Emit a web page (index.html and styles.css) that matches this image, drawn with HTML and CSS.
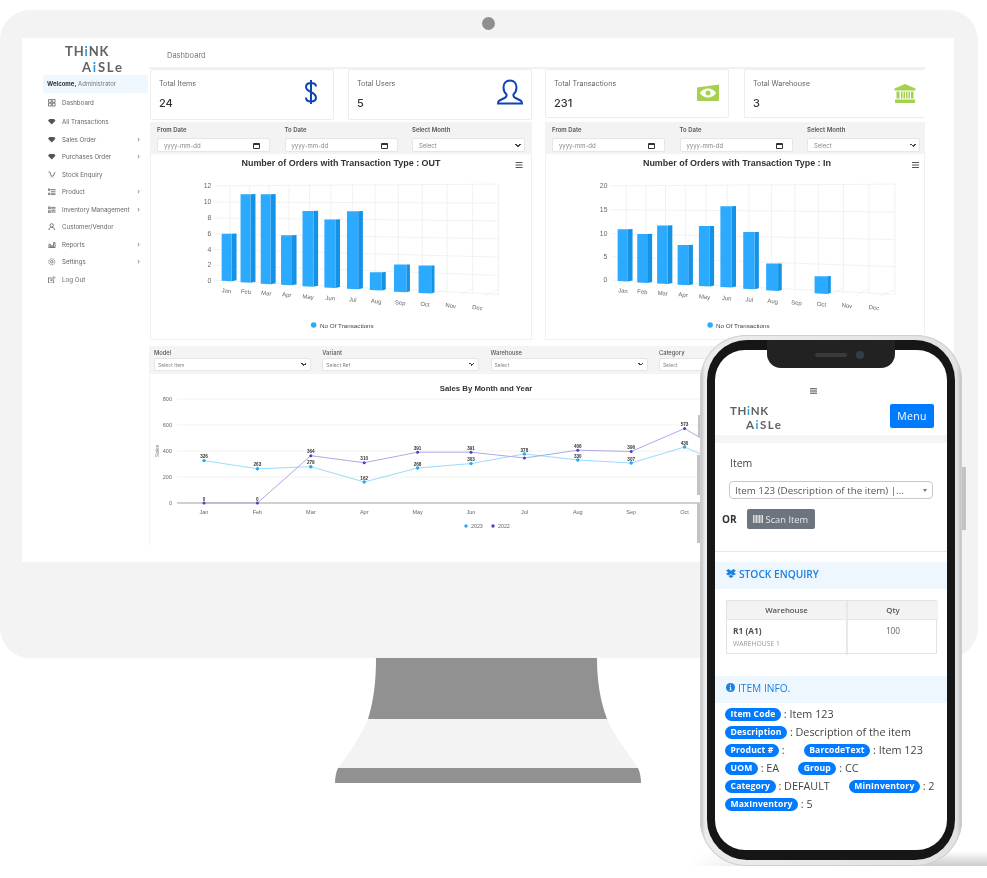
FILE: index.html
```html
<!DOCTYPE html>
<html lang="en">
<head>
<meta charset="utf-8">
<title>Think Aisle</title>
<link rel="stylesheet" href="styles.css">
</head>
<body>
<div class="stage">
  <div class="monitor">
    <div class="camera"></div>
    <div class="screen">
      <aside class="sidebar">
        <div class="logo logo-side"><span class="l1">TH<b>i</b>NK</span><span class="l2">A<b>i</b>SLe</span></div>
        <div class="welcome"><strong>Welcome,</strong> Administrator</div>
        <nav class="menu">
          <div class="mi first"><svg viewBox="0 0 8 8"><path d="M.5.5h3v3h-3zM4.5.5h3v3h-3zM.5 4.5h3v3h-3zM4.5 4.5h3v3h-3z"/></svg><span>Dashboard</span></div>
          <div class="mi"><svg viewBox="0 0 8 8"><path class="f" d="M1.5 1h5L8 3 4 7 0 3z"/></svg><span>All Transactions</span></div>
          <div class="mi"><svg viewBox="0 0 8 8"><path class="f" d="M1.5 1h5L8 3 4 7 0 3z"/></svg><span>Sales Order</span><i>›</i></div>
          <div class="mi"><svg viewBox="0 0 8 8"><path class="f" d="M1.5 1h5L8 3 4 7 0 3z"/></svg><span>Purchases Order</span><i>›</i></div>
          <div class="mi"><svg viewBox="0 0 8 8"><path d="M.5 1h1.500l1.500 4.500h2L7.500 1M2.800 7h.4M5.200 7h.4"/></svg><span>Stock Enquiry</span></div>
          <div class="mi"><svg viewBox="0 0 8 8"><path d="M.5 1h1.500v1.500H.5zM.5 5.500h1.500V7H.5zM3 1.700h5M3 3.500h5M3 5.500h5M3 7h5"/></svg><span>Product</span><i>›</i></div>
          <div class="mi"><svg viewBox="0 0 8 8"><path d="M.5 1h2v2h-2zM.5 5h2v2h-2zM3.500 1.500h4.500M3.500 3h4.500M3.500 5h4.500M3.500 6.500h4.500"/></svg><span>Inventory Management</span><i>›</i></div>
          <div class="mi"><svg viewBox="0 0 8 8"><circle cx="4" cy="2.500" r="1.800"/><path d="M1 7.500c0-2 1.200-3 3-3s3 1 3 3"/></svg><span>Customer/Vendor</span></div>
          <div class="mi"><svg viewBox="0 0 8 8"><path d="M.5 7.500h7M1 3.500h1.500v4H1zM3.500 5h1.500v2.500H3.500zM6 1.500h1.500v6H6z"/></svg><span>Reports</span><i>›</i></div>
          <div class="mi"><svg viewBox="0 0 8 8"><circle cx="4" cy="4" r="1.300"/><circle cx="4" cy="4" r="3.200" stroke-dasharray="1.200 .6"/></svg><span>Settings</span><i>›</i></div>
          <div class="mi"><svg viewBox="0 0 8 8"><path d="M6 4.500v3H.5V2h3M3 5l.3-1.500L6.500.5l1 1L4.500 4.700z"/></svg><span>Log Out</span></div>
        </nav>
      </aside>

      <main class="main">
        <div class="crumb">Dashboard</div>
        <div class="panels">
          <section class="panel">
            <div class="cards">
              <div class="card">
                <div><div class="card-label">Total Items</div><div class="card-value">24</div></div>
                <svg class="ico ico-dollar" width="14" height="26" viewBox="0 0 14 26"><path class="ico-blue" d="M12 7.500C12 5 10 4 7 4S2 5.500 2 8c0 5.500 10 4.500 10 10.500C12 21 10 22.500 7 22.500S2 21 2 18.500M7 1v24"/></svg>
              </div>
              <div class="card">
                <div><div class="card-label">Total Users</div><div class="card-value">5</div></div>
                <svg class="ico" width="26" height="26" viewBox="0 0 26 26"><path class="ico-blue" d="M13 1.500c-4 0-6.500 3-6.500 7 0 3 1.500 5.500 3 7 .4 1.500-.3 2.700-2 3.500l-5 2.500c-1 .5-1.500 1.500-1.500 3h24c0-1.500-.5-2.500-1.500-3l-5-2.500c-1.700-.8-2.400-2-2-3.500 1.500-1.500 3-4 3-7 0-4-2.500-7-6.500-7z"/></svg>
              </div>
            </div>
            <div class="filters">
              <div class="field">From Date<div class="ctl date">yyyy-mm-dd<svg width="7" height="7" viewBox="0 0 7 7"><path d="M.5 1.500h6v5h-6zM.5 2.500h6"/></svg></div></div>
              <div class="field">To Date<div class="ctl date">yyyy-mm-dd<svg width="7" height="7" viewBox="0 0 7 7"><path d="M.5 1.500h6v5h-6zM.5 2.500h6"/></svg></div></div>
              <label class="field">Select Month<select class="ctl sel"><option>Select</option></select></label>
            </div>
            <div class="chart">
              <svg class="chart-svg" viewBox="150 154 382 186">
                <text class="title" x="341" y="166">Number of Orders with Transaction Type : OUT</text>
                <path class="burger" d="M516.500 162.500h7M516.500 165h7M516.500 167.500h7"/>
                <g id="grid-v">
                  <path class="grid" d="M229.300 185.800V282.500M249 185.700V283M268.700 185.500V284M288.700 185.400V285M309.300 185.200V286M330.700 185.100V287.500M352.700 185V289M375.300 184.900V290.500M398.700 184.700V292M422.700 184.600V293M447.700 184.500V294M473.300 184.400V294.500M499.300 184.300V295M447.700 288.600L436 294.500M473.300 289.500L460 296M499.300 290.500L484 297"/>
                </g>
                <path class="grid" d="M212.700 186L499.300 184.300M212.700 202.300L499.300 203.300M212.700 218.300L499.300 221.300M212.700 234.300L499.300 239.300M212.700 250L499.300 257.700M212.700 265.700L499.300 276M212.700 281L499.300 295"/>
                <g class="ylab"><text x="210.500" y="188.500">12</text><text x="210.500" y="204.500">10</text><text x="210.500" y="220.500">8</text><text x="210.500" y="236.500">6</text><text x="210.500" y="252.500">4</text><text x="210.500" y="268">2</text><text x="210.500" y="283.500">0</text></g>
                <g class="bars">
                  <path class="side" d="M231 234.300l5-.3V281l-5 1z"/><path class="front" d="M221 234.300h10V282l-10-.5z"/>
                  <path class="side" d="M250 194.500l5-.2V282.500l-5 1z"/><path class="front" d="M240 194.500h10V283.500l-10-.5z"/>
                  <path class="side" d="M270.300 194.500l5-.2V284l-5 1z"/><path class="front" d="M260.300 194.500h10V285l-10-.6z"/>
                  <path class="side" d="M291.700 235.800l4.600-.3V285l-4.600 1z"/><path class="front" d="M280.700 235.800h11V286l-11-.6z"/>
                  <path class="side" d="M313.300 211.200l4.700-.2V286.500l-4.700 1z"/><path class="front" d="M302.300 211.200h11V287.500l-11-.6z"/>
                  <path class="side" d="M335.300 219.900l4.700-.2V287.700l-4.700 1z"/><path class="front" d="M324.300 219.900h11V288.700l-11-.6z"/>
                  <path class="side" d="M358.300 211.500l4.700-.2V289l-4.700 1z"/><path class="front" d="M347 211.500h11.300V290l-11.300-.6z"/>
                  <path class="side" d="M382 272.800l4-.2V290.300l-4 1z"/><path class="front" d="M370 272.800h12V291.300l-12-.6z"/>
                  <path class="side" d="M406.700 265.200l3.600-.2V292l-3.600 1z"/><path class="front" d="M394.300 265.200h12.400V293l-12.400-.6z"/>
                  <path class="side" d="M431.700 266.200l3.300-.2V293.300l-3.300 1z"/><path class="front" d="M419 266.200h12.700V294.300l-12.700-.6z"/>
                </g>
                <g class="xlab">
                  <text transform="translate(225.700 293.500) rotate(5)">Jan</text><text transform="translate(245.300 294.500) rotate(5)">Feb</text><text transform="translate(265.700 296) rotate(5)">Mar</text><text transform="translate(286.300 297.500) rotate(5)">Apr</text><text transform="translate(307.700 299.500) rotate(6)">May</text><text transform="translate(330 301) rotate(6)">Jun</text><text transform="translate(352.700 302.500) rotate(6)">Jul</text><text transform="translate(376.300 304) rotate(6)">Aug</text><text transform="translate(400.300 305.500) rotate(6)">Sep</text><text transform="translate(425.300 307) rotate(6)">Oct</text><text transform="translate(451 308.500) rotate(6)">Nov</text><text transform="translate(478 310.500) rotate(6)">Dec</text>
                </g>
                <circle class="dot" cx="313.500" cy="326" r="2.800"/><text class="legend" x="320" y="328.500">No Of Transactions</text>
              </svg>
            </div>
          </section>

          <section class="panel">
            <div class="cards cards-r">
              <div class="card">
                <div><div class="card-label">Total Transactions</div><div class="card-value">231</div></div>
                <svg class="ico ico-low" width="22" height="18" viewBox="0 0 22 18"><path class="ico-green" fill-rule="evenodd" d="M0 3.500L22 .5v16.500H0zM11 4.500c-4 0-7 2.500-8 4.500 1 2 4 4.500 8 4.500s7-2.500 8-4.500c-1-2-4-4.500-8-4.500zm0 2a2.500 2.500 0 1 1 0 5 2.500 2.500 0 0 1 0-5z"/></svg>
              </div>
              <div class="card">
                <div><div class="card-label">Total Warehouse</div><div class="card-value">3</div></div>
                <svg class="ico ico-low" width="22" height="19" viewBox="0 0 22 19"><path class="ico-green" d="M11 0l10.500 4.500v2H.5v-2zM1 15.500h20V19H1zM2.500 7.500h3v7h-3zM7 7.500h1.500v7H7zM9.500 7.500h1.500v7H9.500zM12 7.500h1.500v7H12zM14.500 7.500h1.500v7h-1.500zM17 7.500h2.500v7H17z"/></svg>
              </div>
            </div>
            <div class="filters">
              <div class="field">From Date<div class="ctl date">yyyy-mm-dd<svg width="7" height="7" viewBox="0 0 7 7"><path d="M.5 1.500h6v5h-6zM.5 2.500h6"/></svg></div></div>
              <div class="field">To Date<div class="ctl date">yyyy-mm-dd<svg width="7" height="7" viewBox="0 0 7 7"><path d="M.5 1.500h6v5h-6zM.5 2.500h6"/></svg></div></div>
              <label class="field">Select Month<select class="ctl sel"><option>Select</option></select></label>
            </div>
            <div class="chart">
              <svg class="chart-svg" viewBox="545 154 380 186">
                <text class="title" x="737" y="166">Number of Orders with Transaction Type : In</text>
                <path class="burger" d="M913 162.500h7M913 165h7M913 167.500h7"/>
                <use href="#grid-v" transform="translate(396.400 0)"/>
                <path class="grid" d="M610 186L895.700 184.300M610 210L895.700 212.300M610 234L895.700 240M610 257.300L895.700 267.300M610 280.700L895.700 295"/>
                <g class="ylab"><text x="606.700" y="188.500">20</text><text x="606.700" y="212.500">15</text><text x="606.700" y="236.500">10</text><text x="606.700" y="259.800">5</text><text x="606.700" y="283.200">0</text></g>
                <g class="bars">
                  <path class="side" d="M627.300 229.700l4.700-.2V281.300l-4.700 1z"/><path class="front" d="M617 229.700h10.300V282.300l-10.300-.6z"/>
                  <path class="side" d="M646.700 234.500l5-.2V282.700l-5 1z"/><path class="front" d="M636.700 234.500h10V283.700l-10-.6z"/>
                  <path class="side" d="M667.300 225.800l4.700-.2V283.700l-4.700 1z"/><path class="front" d="M656.700 225.800h10.600V284.700l-10.600-.6z"/>
                  <path class="side" d="M688 245.500l4.700-.2V285l-4.700 1z"/><path class="front" d="M677.300 245.500H688V286l-10.700-.6z"/>
                  <path class="side" d="M709.700 226.500l4.300-.2V286.300l-4.300 1z"/><path class="front" d="M698.700 226.500h11V287.300l-11-.6z"/>
                  <path class="side" d="M731.700 206.500l4.300-.2V287.300l-4.300 1z"/><path class="front" d="M720.300 206.500h11.400V288.300l-11.400-.6z"/>
                  <path class="side" d="M754.700 232.500l4.300-.2V289l-4.300 1z"/><path class="front" d="M743.300 232.500h11.400V290l-11.400-.6z"/>
                  <path class="side" d="M778.300 264.200l3.700-.2V290.700l-3.700 1z"/><path class="front" d="M766.300 264.200h12V291.700l-12-.6z"/>
                  <path class="side" d="M827.700 276.900l3.600-.2V293.700l-3.600 1z"/><path class="front" d="M815 276.900h12.700V294.700l-12.700-.6z"/>
                </g>
                <g class="xlab">
                  <text transform="translate(622.100 293.500) rotate(5)">Jan</text><text transform="translate(641.700 294.500) rotate(5)">Feb</text><text transform="translate(662.100 296) rotate(5)">Mar</text><text transform="translate(682.700 297.500) rotate(5)">Apr</text><text transform="translate(704.100 299.500) rotate(6)">May</text><text transform="translate(726.400 301) rotate(6)">Jun</text><text transform="translate(749.100 302.500) rotate(6)">Jul</text><text transform="translate(772.700 304) rotate(6)">Aug</text><text transform="translate(796.700 305.500) rotate(6)">Sep</text><text transform="translate(821.700 307) rotate(6)">Oct</text><text transform="translate(847.400 308.500) rotate(6)">Nov</text><text transform="translate(874.400 310.500) rotate(6)">Dec</text>
                </g>
                <circle class="dot" cx="710" cy="326" r="2.800"/><text class="legend" x="716" y="328.500">No Of Transactions</text>
              </svg>
            </div>
          </section>
        </div>

        <div class="filters4">
          <label class="field">Model<select class="ctl sel"><option>Select Item</option></select></label>
          <label class="field">Variant<select class="ctl sel"><option>Select Ref</option></select></label>
          <label class="field">Warehouse<select class="ctl sel"><option>Select</option></select></label>
          <label class="field">Category<select class="ctl sel"><option>Select</option></select></label>
        </div>

        <div class="linechart">
          <svg class="line-svg" viewBox="149 374 776 172">
            <text class="title title-sm" x="485" y="391">Sales By Month and Year</text>
            <path class="grid" d="M176 399H925M176 425H925M176 451H925M176 477H925"/>
            <path class="axis" d="M176 503H925"/>
            <g class="ylab ylab-sm"><text x="171" y="401">800</text><text x="171" y="427">600</text><text x="171" y="453">400</text><text x="171" y="479">200</text><text x="171" y="505">0</text></g>
            <text class="ytitle" transform="translate(158 451) rotate(-90)">Sales</text>
            <polyline class="s23" points="203,460.600 256.400,468.800 309.800,466.700 363.200,482 416.600,468 470,463.600 523.400,453.900 576.800,460 630.200,463 683.600,447 737,470"/>
            <polyline class="s22" points="203,503 256.400,503 309.800,455.700 363.200,462.700 416.600,452.200 470,452.200 523.400,458 576.800,450.200 630.200,451.500 683.600,428.500 737,460"/>
            <g class="m23"><circle cx="203" cy="460.600" r="1.700"/><circle cx="256.400" cy="468.800" r="1.700"/><circle cx="309.800" cy="466.700" r="1.700"/><circle cx="363.200" cy="482" r="1.700"/><circle cx="416.600" cy="468" r="1.700"/><circle cx="470" cy="463.600" r="1.700"/><circle cx="523.400" cy="453.900" r="1.700"/><circle cx="576.800" cy="460" r="1.700"/><circle cx="630.200" cy="463" r="1.700"/><circle cx="683.600" cy="447" r="1.700"/></g>
            <g class="m22"><circle cx="203" cy="503" r="1.500"/><circle cx="256.400" cy="503" r="1.500"/><circle cx="309.800" cy="455.700" r="1.500"/><circle cx="363.200" cy="462.700" r="1.500"/><circle cx="416.600" cy="452.200" r="1.500"/><circle cx="470" cy="452.200" r="1.500"/><circle cx="523.400" cy="458" r="1.500"/><circle cx="576.800" cy="450.200" r="1.500"/><circle cx="630.200" cy="451.500" r="1.500"/><circle cx="683.600" cy="428.500" r="1.500"/></g>
            <g class="dl">
              <text x="203" y="458">326</text><text x="256.400" y="466">263</text><text x="309.800" y="464">279</text><text x="363.200" y="479.500">162</text><text x="416.600" y="465.500">268</text><text x="470" y="461">303</text><text x="523.400" y="451.500">378</text><text x="576.800" y="457.500">330</text><text x="630.200" y="460.500">307</text><text x="683.600" y="444.500">430</text>
              <text x="203" y="500.500">0</text><text x="256.400" y="500.500">0</text><text x="309.800" y="453">364</text><text x="363.200" y="460">310</text><text x="416.600" y="449.500">391</text><text x="470" y="449.500">391</text><text x="576.800" y="447.500">406</text><text x="630.200" y="449">396</text><text x="683.600" y="426">573</text>
            </g>
            <g class="xlab xlab-line"><text x="203" y="514">Jan</text><text x="256.400" y="514">Feb</text><text x="309.800" y="514">Mar</text><text x="363.200" y="514">Apr</text><text x="416.600" y="514">May</text><text x="470" y="514">Jun</text><text x="523.400" y="514">Jul</text><text x="576.800" y="514">Aug</text><text x="630.200" y="514">Sep</text><text x="683.600" y="514">Oct</text></g>
            <circle class="m23" cx="465" cy="526" r="1.700"/><text class="ll" x="470" y="528">2023</text>
            <circle class="m22" cx="492" cy="526" r="1.700"/><text class="ll" x="497" y="528">2022</text>
          </svg>
        </div>
      </main>
    </div>
  </div>

  <svg class="stand" width="306" height="126" viewBox="335 658 306 126">
    <path class="stand-mid" d="M368 719H607C615 738 628 752 638 768H338C348 755 360 738 368 719Z"/>
    <path class="stand-dark" d="M376 658H597C597 680 600 700 607 719H368C374 700 376 680 376 658Z"/>
    <path class="stand-dark" d="M338 768H638C640 772 641 778 641 783H335C335 778 336 772 338 768Z"/>
  </svg>

  <div class="floor"></div>

  <div class="phone">
    <span class="btn btn-l1"></span><span class="btn btn-l2"></span><span class="btn btn-l3"></span><span class="btn btn-r"></span>
    <div class="bezel">
      <div class="notch"><span class="speaker"></span><span class="lens"></span></div>
      <div class="pscreen">
        <div class="pburger"><svg width="7" height="6" viewBox="0 0 7 6"><path d="M0 .8h7M0 3h7M0 5.200h7"/></svg></div>
        <div class="phead">
          <div class="logo logo-phone"><span class="l1">TH<b>i</b>NK</span><span class="l2">A<b>i</b>SLe</span></div>
          <div class="menu-btn">Menu</div>
        </div>
        <div class="pband"></div>
        <div class="pform">
          <div class="plabel">Item</div>
          <div class="pselect"><span>Item 123 (Description of the item) |...</span><em></em></div>
          <div class="por"><strong>OR</strong>
            <div class="scan"><svg width="10" height="8" viewBox="0 0 10 8"><path d="M.5 0v8M2 0v8M3.500 0v8M5 0v8M6.500 0v8M8 0v8M9.500 0v8"/></svg>Scan Item</div>
          </div>
        </div>
        <div class="psec psec-stock">
          <svg width="10" height="9" viewBox="0 0 10 9"><path d="M2.500 0L5 1.700 7.500 0 10 1.700 7.800 3.300 10 5 7.500 6.600 5 5 2.500 6.600 0 5l2.200-1.700L0 1.700zM2.500 7.200L5 5.700l2.500 1.500L5 9z"/></svg>
          STOCK ENQUIRY
        </div>
        <div class="ptable">
          <div class="th">Warehouse</div><div class="th">Qty</div>
          <div class="td"><strong>R1 (A1)</strong><small>WAREHOUSE 1</small></div><div class="td td-c">100</div>
        </div>
        <div class="psec psec-info">
          <svg width="9" height="9" viewBox="0 0 9 9"><circle class="info-c" cx="4.500" cy="4.500" r="4.500"/><path class="info-i" d="M4.500 1.700v1.100M3.700 4h.9v2.800M3.500 6.900h2"/></svg>
          ITEM INFO.
        </div>
        <div class="pinfo">
          <div class="prow"><span class="pair"><b class="pill">Item Code</b> : Item 123</span></div>
          <div class="prow"><span class="pair"><b class="pill">Description</b> : Description of the item</span></div>
          <div class="prow"><span class="pair"><b class="pill">Product #</b> :</span><span class="pair"><b class="pill">BarcodeText</b> : Item 123</span></div>
          <div class="prow"><span class="pair"><b class="pill">UOM</b> : EA</span><span class="pair"><b class="pill">Group</b> : CC</span></div>
          <div class="prow"><span class="pair"><b class="pill">Category</b> : DEFAULT</span><span class="pair"><b class="pill">MinInventory</b> : 2</span></div>
          <div class="prow"><span class="pair"><b class="pill">MaxInventory</b> : 5</span></div>
        </div>
      </div>
    </div>
  </div>
</div>
</body>
</html>
```

FILE: styles.css
```css
* { box-sizing: border-box; }
html, body { margin: 0; background: #fff; }
body { font-family: Inter, "Open Sans", sans-serif; color: #555; }
svg { display: block; }

.stage { position: relative; width: 987px; height: 878px; overflow: hidden; }

/* monitor */
.monitor {
  position: relative;
  width: 978px; height: 648px;
  margin-top: 10px;
  padding: 28px 24px 96px 22px;
  background: #f3f3f3;
  border-radius: 30px;
}
.camera { position: absolute; left: 482px; top: 7px; width: 13px; height: 13px; border-radius: 50%; background: #8f8f8f; }
.screen { display: flex; width: 932px; height: 524px; background: #fff; overflow: hidden; filter: blur(.3px); }

.stand { margin-left: 335px; }
.stand-dark { fill: #919191; }
.stand-mid { fill: #f3f3f3; }

/* sidebar */
.sidebar { flex: 0 0 127px; padding-left: 21px; }
.logo { display: flex; flex-direction: column; font-family: Lato, sans-serif; font-weight: 700; color: #626262; }
.logo b { color: #2a9ad8; font-weight: 700; }
.logo-side { height: 37px; padding: 6px 0 0 22px; font-size: 13px; line-height: 15.600px; letter-spacing: .9px; }
.logo-side .l2 { padding-left: 17px; letter-spacing: 1.800px; }
.welcome { height: 18px; line-height: 18px; width: 105px; padding-left: 4px; background: #f0f8ff; font-size: 6px; color: #777; white-space: nowrap; }
.welcome strong { color: #333; }
.menu { padding-top: 1px; padding-right: 9px; }
.mi { display: flex; align-items: center; height: 17.500px; padding-left: 5px; font-size: 6.200px; color: #666; white-space: nowrap; }
.mi.first { margin-bottom: 1.500px; }
.mi svg { flex: none; width: 7.500px; height: 7.500px; margin-right: 6.500px; fill: none; stroke: #555; stroke-width: .8; }
.mi svg .f { fill: #555; stroke: none; }
.mi i { margin-left: auto; font-style: normal; font-size: 7px; color: #666; }

/* main */
.main { flex: 0 0 776px; height: 524px; overflow: hidden; }
.crumb { height: 31px; padding: 13px 0 0 18px; font-size: 7.500px; color: #777; border-bottom: 2px solid #f1f1f1; }
.panels { display: grid; grid-template-columns: 382px 380px; column-gap: 13px; padding-left: 1px; }
.cards { display: grid; grid-template-columns: 184px 184px; column-gap: 14px; height: 53px; }
.cards-r { grid-template-columns: 184px 181px; column-gap: 15px; }
.card { display: flex; justify-content: space-between; height: 51px; padding: 9px 8px 0 8px; background: #fff; border: 1px solid #ededed; border-radius: 2px; }
.cards-r .card { height: 49px; padding-top: 9px; }
.cards-r .card:last-child { border-right: 0; }
.card-label { font-size: 7.200px; color: #666; }
.card-value { margin-top: 8px; font-size: 11px; font-weight: 500; color: #333; }
.ico { margin-top: 0; }
.ico-dollar { margin-right: 7px; }
.ico-low { margin-top: 5px; margin-right: 1px; }
.ico-blue { fill: none; stroke: #0f44b5; stroke-width: 2; }
.ico-green { fill: #a5d14c; }

.filters { display: grid; grid-template-columns: repeat(3, 113px); column-gap: 14.500px; height: 32px; padding: 4px 7px 0; background: #f3f3f3; }
.field { display: block; font-size: 6px; font-weight: 600; color: #555; white-space: nowrap; }
.ctl { display: block; width: 100%; height: 14px; margin-top: 5px; padding: 0 6px; font: 400 6px Inter, sans-serif; color: #888; background: #fff; border: 1px solid #e6e6e6; border-radius: 2px; }
.date { display: flex; align-items: center; justify-content: space-between; padding-right: 9px; }
.date svg { fill: none; stroke: #333; stroke-width: 1; }
.sel {
  appearance: none;
  background-image: linear-gradient(45deg, transparent 50%, #444 50%, #444 70%, transparent 70%), linear-gradient(-45deg, transparent 50%, #444 50%, #444 70%, transparent 70%);
  background-size: 3px 3px;
  background-position: right 6px center, right 3px center;
  background-repeat: no-repeat;
}

.chart { height: 186px; border: 1px solid #f1f1f1; border-top: 0; }
.chart-svg { width: 100%; height: 100%; margin: 0; }
.title { font: 700 9px "Liberation Sans", sans-serif; fill: #333; text-anchor: middle; }
.title-sm { font-size: 7.800px; }
.burger { fill: none; stroke: #555; stroke-width: 1.100; }
.grid { fill: none; stroke: #efefef; stroke-width: .8; }
.axis { fill: none; stroke: #a2a2a2; stroke-width: 1.200; }
.ylab text { font: 6.800px "Liberation Sans", sans-serif; fill: #666; text-anchor: end; }
.ylab-sm text { font-size: 5.500px; }
.xlab text { font: 6px "Liberation Sans", sans-serif; fill: #666; text-anchor: middle; }
.xlab-line text { font-size: 5.500px; }
.front { fill: #2caaff; }
.side { fill: #1492e6; }
.dot { fill: #2caaff; }
.legend { font: 6.300px "Liberation Sans", sans-serif; fill: #444; }

.filters4 { display: grid; grid-template-columns: repeat(4, 157px); column-gap: 11.300px; height: 28px; margin-top: 6px; padding: 3px 0 0 5px; background: #f4f4f4; }
.filters4 .field { font-weight: 500; font-size: 5.800px; }
.filters4 .ctl { height: 13px; margin-top: 2px; font-size: 5px; padding: 0 3px; }
.linechart { height: 172px; border-left: 1px solid #f3f3f3; }
.line-svg { width: 776px; height: 172px; }
.ytitle { font: 5px "Liberation Sans", sans-serif; fill: #777; text-anchor: middle; }
.s23 { fill: none; stroke: #9adcfb; stroke-width: 1; }
.s22 { fill: none; stroke: #aea8e6; stroke-width: 1; }
.m23, .m23 circle { fill: #27a8f5; }
.m22, .m22 circle { fill: #4a3fc9; }
.dl text { font: 700 4.600px "Liberation Sans", sans-serif; fill: #333; text-anchor: middle; }
.ll { font: 5.300px "Liberation Sans", sans-serif; fill: #666; }

/* floor shadow */
.floor { position: absolute; left: 690px; top: 851px; width: 297px; height: 15px; background: linear-gradient(to bottom, rgba(200,200,200,0), #cdcdcd); -webkit-mask-image: linear-gradient(90deg, transparent, #000 40%); mask-image: linear-gradient(90deg, transparent, #000 40%); }

/* phone */
.phone { position: absolute; left: 700px; top: 335px; width: 262px; height: 531px; padding: 5px 7px 6px; background: linear-gradient(90deg, #bdbdbd, #ececec 2%, #e2e2e2 98%, #bdbdbd); border-radius: 46px; box-shadow: inset 0 0 0 1px #cfcfcf; }
.btn { position: absolute; background: #c3c3c3; }
.btn-l1 { left: -2px; top: 80px; width: 2px; height: 22px; }
.btn-l2 { left: -3px; top: 120px; width: 3px; height: 40px; }
.btn-l3 { left: -3px; top: 168px; width: 3px; height: 40px; }
.btn-r { right: -4px; top: 132px; width: 4px; height: 63px; }
.bezel { position: relative; height: 520px; padding: 10px 8px; background: #161616; border-radius: 40px; }
.notch { position: absolute; z-index: 1; left: 60px; top: 0; width: 128px; height: 28px; background: #222; border-radius: 0 0 14px 14px; }
.speaker { position: absolute; left: 48px; top: 13px; width: 32px; height: 4px; border-radius: 2px; background: #3a3a3a; }
.lens { position: absolute; left: 89px; top: 11px; width: 8px; height: 8px; border-radius: 50%; background: #343c4c; }
.pscreen { height: 500px; padding-top: 38px; background: #fff; border-radius: 30px; overflow: hidden; font-family: "Open Sans", sans-serif; color: #444; filter: blur(.25px); }
.pburger { display: flex; justify-content: center; height: 14px; padding-right: 36px; }
.pburger path { fill: none; stroke: #444; stroke-width: 1; }
.phead { display: flex; justify-content: space-between; height: 33px; padding: 2px 13px 0 15px; }
.logo-phone { font-size: 11.500px; line-height: 13.800px; letter-spacing: .7px; }
.logo-phone .l2 { padding-left: 16px; letter-spacing: 1.500px; }
.menu-btn { width: 44px; height: 24px; line-height: 24px; text-align: center; font-size: 10.500px; letter-spacing: .3px; color: #fff; background: #007bff; border-radius: 2px; }
.pband { height: 8px; background: #f3f5f7; }
.pform { height: 109px; padding: 13px 14px 0; border-bottom: 1px solid #e8e8e8; }
.plabel { font-size: 10.500px; line-height: 14px; padding-left: 1px; }
.pselect { display: flex; justify-content: space-between; align-items: center; width: 204px; height: 18px; margin-top: 11px; padding: 0 5px; font-size: 9.800px; color: #555; border: 1px solid #c8c8c8; border-radius: 4px; white-space: nowrap; }
.pselect em { width: 0; height: 0; border: 2.500px solid transparent; border-top: 3px solid #777; border-bottom: 0; }
.por { display: flex; align-items: center; gap: 10px; margin: 10px 0 0 -7px; font-size: 10px; color: #333; }
.scan { display: flex; align-items: center; gap: 3px; width: 68px; height: 20px; padding-left: 6px; font-size: 9.300px; color: #e6e8ea; background: #6c757d; border-radius: 2px; }
.scan path { fill: none; stroke: #ddd; stroke-width: 1; }
.psec { display: flex; align-items: center; gap: 3px; height: 27px; padding: 0 0 4px 11px; font-size: 10.200px; font-weight: 600; color: #1a80e4; background: #eef7fd; }
.psec-stock { margin-top: 10px; }
.psec-stock path { fill: #1a80e4; }
.psec-info { margin-top: 22px; font-weight: 400; }
.info-c { fill: #1a80e4; }
.info-i { fill: none; stroke: #fff; stroke-width: 1; }
.ptable { display: grid; grid-template-columns: 121px 90px; grid-template-rows: 18px 36px; width: 211px; height: 54px; margin: 11px 0 0 11px; border: 1px solid #e2e2e2; }
.th { line-height: 18px; text-align: center; font-size: 7.800px; font-weight: 600; color: #555; background: #f3f3f3; }
.th:first-child { border-right: 2px solid #e8e8e8; }
.td { padding: 5px 0 0 6px; font-size: 8.300px; border-top: 1px solid #e8e8e8; }
.td:nth-child(3) { border-right: 2px solid #e8e8e8; }
.td strong { display: block; font-weight: 700; color: #4a5058; }
.td small { display: block; margin-top: 3px; font-size: 6.800px; color: #999; }
.td-c { padding-left: 0; text-align: center; color: #666; }
.pinfo { padding: 1px 0 0 10px; }
.prow { display: flex; gap: 19px; height: 18px; align-items: center; font-size: 10.800px; color: #444; white-space: nowrap; }
.pill { display: inline-block; height: 13px; line-height: 13px; padding: 0 5.500px; font-size: 8.600px; font-weight: 700; letter-spacing: .15px; color: #fff; background: #007bff; border-radius: 7px; vertical-align: 1px; }
```
